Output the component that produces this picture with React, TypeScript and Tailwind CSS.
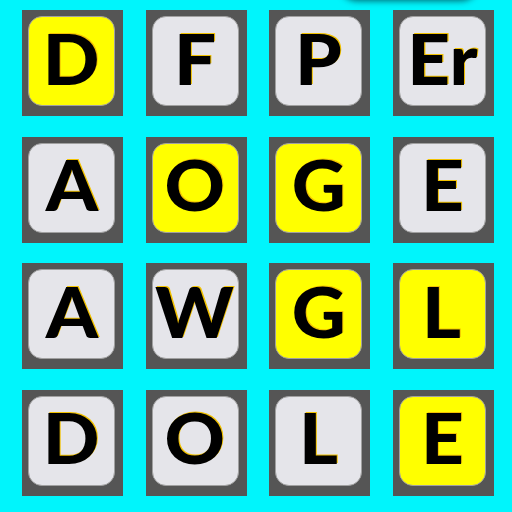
import React from 'react';

type Tile = { letter: string; hit: boolean };

const rows: Tile[][] = [
  [
    { letter: 'D', hit: true },
    { letter: 'F', hit: false },
    { letter: 'P', hit: false },
    { letter: 'Er', hit: false },
  ],
  [
    { letter: 'A', hit: false },
    { letter: 'O', hit: true },
    { letter: 'G', hit: true },
    { letter: 'E', hit: false },
  ],
  [
    { letter: 'A', hit: false },
    { letter: 'W', hit: false },
    { letter: 'G', hit: true },
    { letter: 'L', hit: true },
  ],
  [
    { letter: 'D', hit: false },
    { letter: 'O', hit: false },
    { letter: 'L', hit: false },
    { letter: 'E', hit: true },
  ],
];

function LetterTile({ letter, hit }: Tile) {
  return (
    <div className="w-[101px] h-[106px] bg-[#555555] pt-[6px] pl-[6px]">
      <div
        className={`w-[87px] h-[90px] rounded-[14px] border border-[#a0a0a0] flex items-center justify-center ${
          hit ? 'bg-[#ffff00]' : 'bg-[#e5e5ea]'
        }`}
      >
        <span className="text-[71px] leading-none font-black text-black scale-x-[1.05] [font-family:Lato,'Noto_Sans',sans-serif] [text-shadow:1px_-1.5px_0.5px_#f2c200] -mt-[8px]">
          {letter}
        </span>
      </div>
    </div>
  );
}

export default function App() {
  return (
    <div className="relative w-[512px] h-[512px] overflow-hidden bg-[#00f5fc]">
      {/* bottom edge of a floating pill sitting above the viewport */}
      <div className="absolute left-[338px] top-[-40px] w-[142px] h-[40px] rounded-full bg-[#00f5fc] shadow-[0_1px_6px_rgba(0,90,100,0.9)]" />
      <div className="flex flex-col gap-[20.5px] pt-[10px] pl-[22px]">
        {rows.map((row, r) => (
          <div key={r} className="flex gap-[22.5px]">
            {row.map((t, c) => (
              <LetterTile key={c} {...t} />
            ))}
          </div>
        ))}
      </div>
    </div>
  );
}
